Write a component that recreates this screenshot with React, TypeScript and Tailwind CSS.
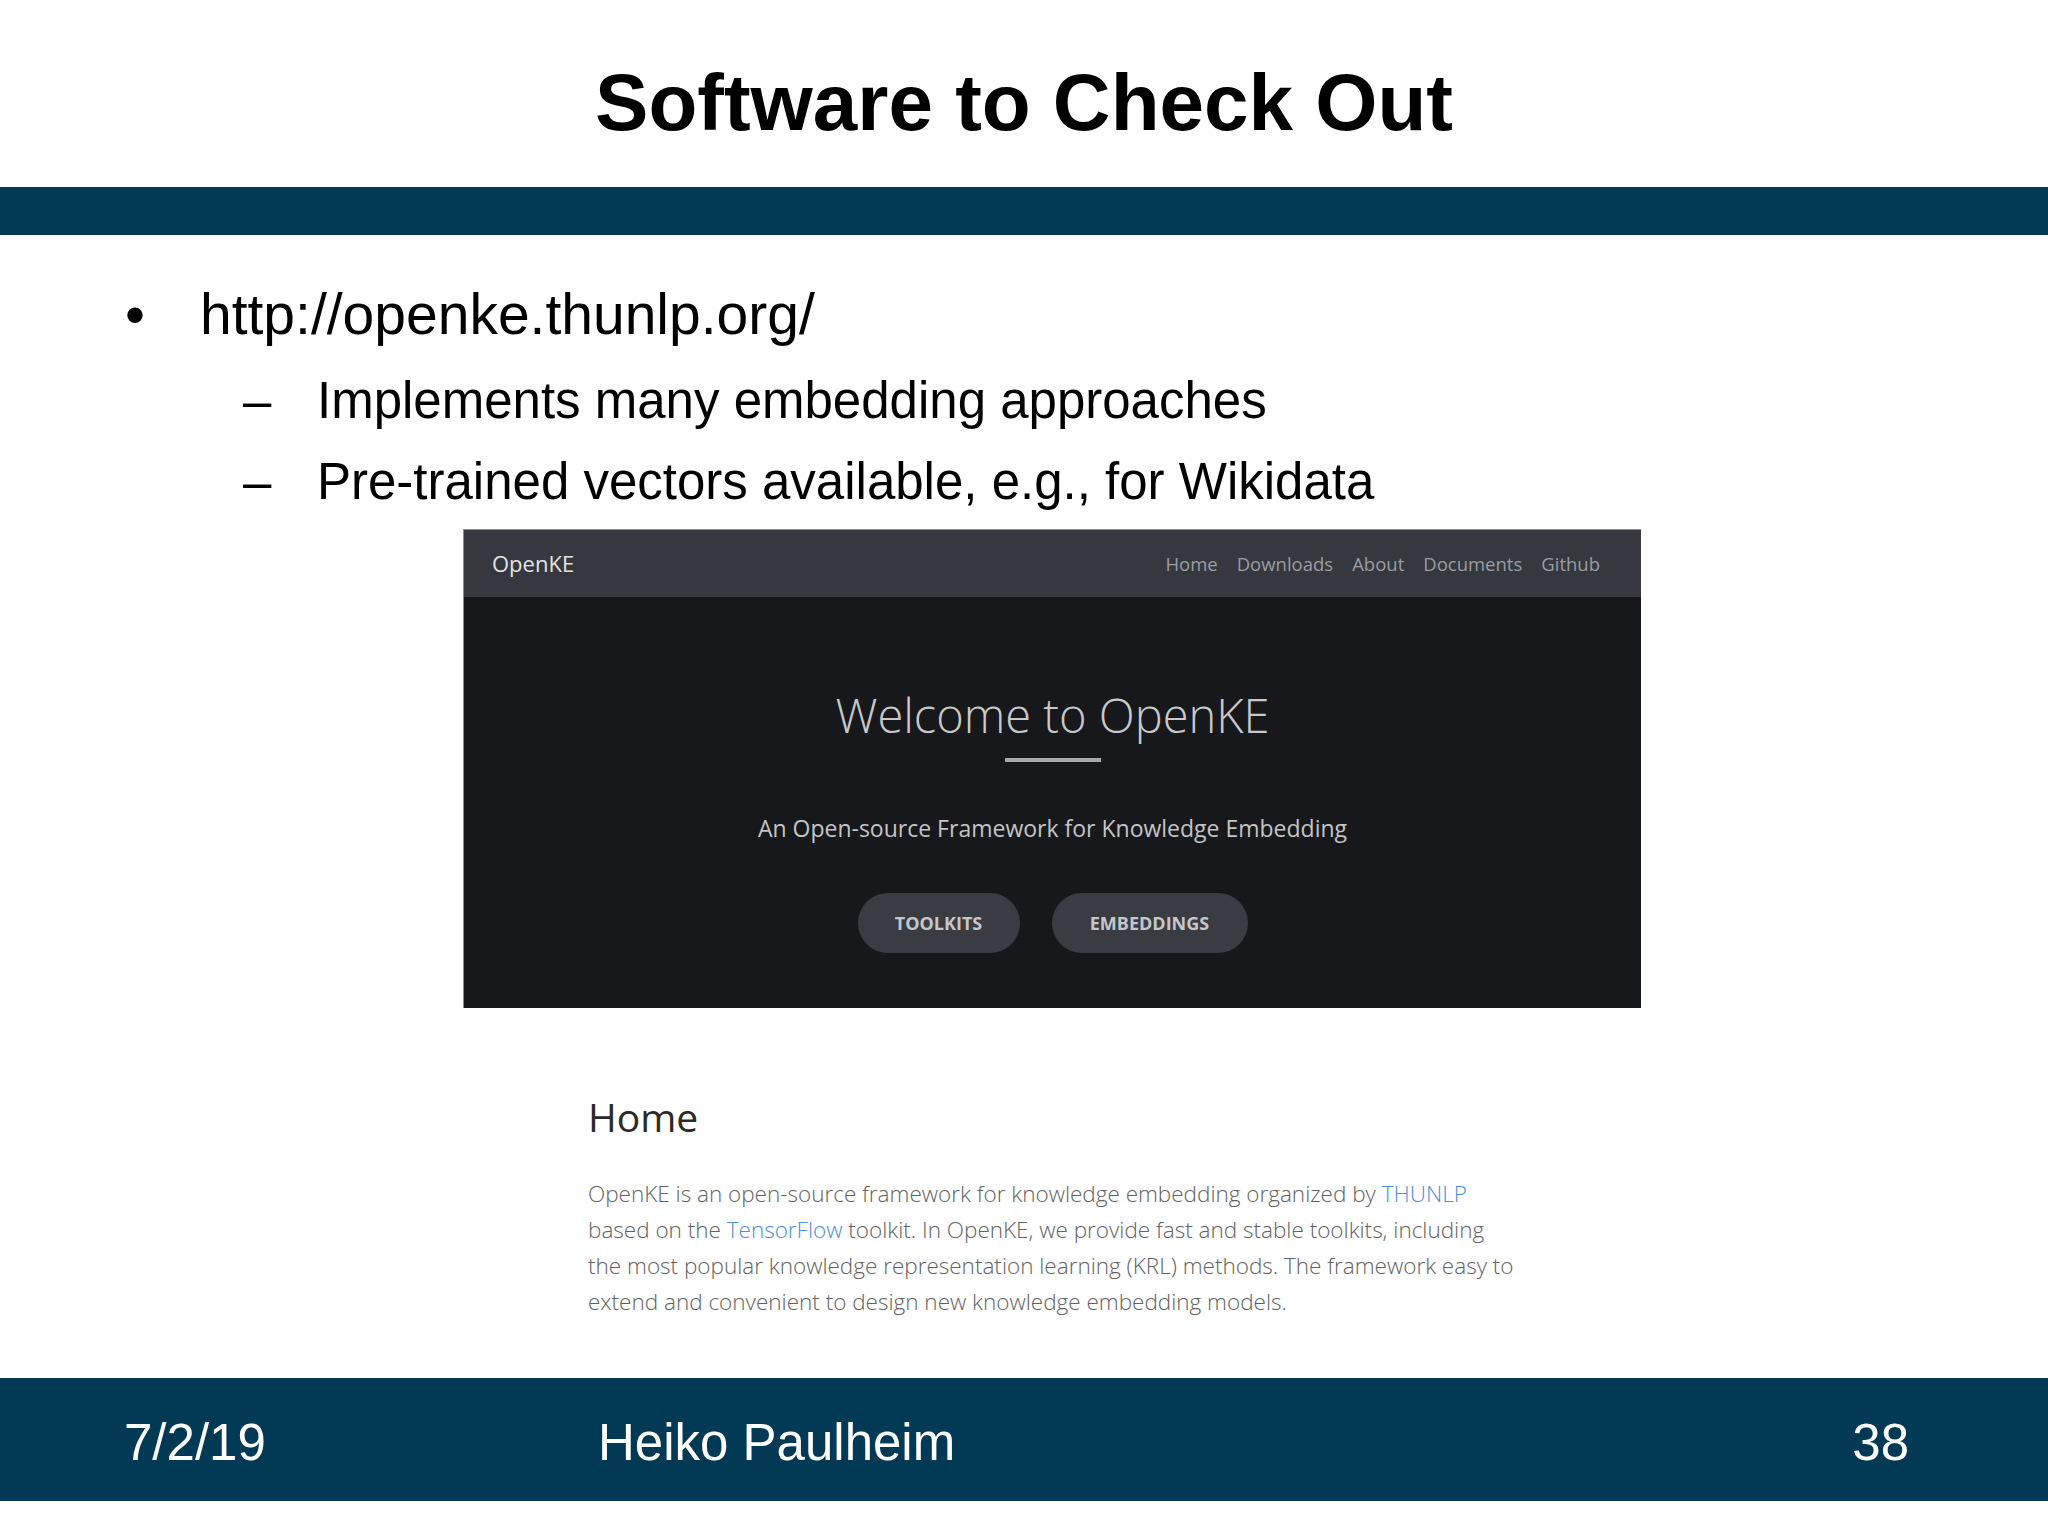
import React from 'react';

const SLIDE_FONT = { fontFamily: '"Liberation Sans", Arial, sans-serif' };
const WEB_FONT = { fontFamily: '"Open Sans", "Noto Sans", sans-serif' };

const NAV_LINKS = ['Home', 'Downloads', 'About', 'Documents', 'Github'];

function OpenKEShot() {
  return (
    <div className="ml-[463px] mt-[7px] w-[1178px]" style={WEB_FONT}>
      {/* Dark hero panel */}
      <div className="h-[479px] border-t border-l border-[#8e8e8e] bg-[#17181c] flex flex-col">
        <div className="h-[67px] shrink-0 bg-[#35383e] flex items-center justify-between pl-[28px] pr-[41px]">
          <span className="text-[22px] text-[#e4e4e4]">OpenKE</span>
          <nav className="flex gap-[19px] text-[18.5px] text-[#9a9da3]">
            {NAV_LINKS.map((l) => (
              <span key={l}>{l}</span>
            ))}
          </nav>
        </div>
        <div className="flex-1 flex flex-col items-center pt-[95px]">
          <h1 className="text-[47px] leading-[47px] font-light text-[#c9c9ca]">Welcome to OpenKE</h1>
          <div className="mt-[19px] h-[4px] w-[96px] bg-[#a7a7a8]" />
          <p className="mt-[55px] text-[23px] leading-[23px] text-[#c4c4c5]">
            An Open-source Framework for Knowledge Embedding
          </p>
          <div className="mt-[53px] flex gap-[32px]">
            <button className="h-[60px] w-[162px] rounded-full bg-[#393c42] text-[18px] font-bold text-[#c6c6c8]">
              TOOLKITS
            </button>
            <button className="h-[60px] w-[196px] rounded-full bg-[#393c42] text-[18px] font-bold text-[#c6c6c8]">
              EMBEDDINGS
            </button>
          </div>
        </div>
      </div>

      {/* Home section below hero */}
      <div className="ml-[125px] mt-[87px]">
        <h2 className="text-[39px] leading-[44px] text-[#2a2a2a]">Home</h2>
        <p className="mt-[37px] text-[22.5px] leading-[36px] font-light text-[#626262] whitespace-nowrap">
          OpenKE is an open-source framework for knowledge embedding organized by{' '}
          <span className="text-[#4a8ee0]">THUNLP</span>
          <br />
          based on the <span className="text-[#4a8ee0]">TensorFlow</span> toolkit. In OpenKE, we provide fast and stable
          toolkits, including
          <br />
          the most popular knowledge representation learning (KRL) methods. The framework easy to
          <br />
          extend and convenient to design new knowledge embedding models.
        </p>
      </div>
    </div>
  );
}

export default function App() {
  return (
    <div className="w-[2048px] h-[1536px] bg-white flex flex-col overflow-hidden" style={SLIDE_FONT}>
      <header className="h-[187px] shrink-0 pt-[63px] text-center">
        <h1 className="text-[80px] leading-[80px] font-bold text-black">Software to Check Out</h1>
      </header>
      <div className="h-[48px] shrink-0 bg-[#023a55]" />

      <main className="flex-1 pt-[51px]">
        <div className="flex items-start text-[57px] leading-[57px] text-black">
          <span className="w-[75px] pl-[125px] box-content">•</span>
          <span>http://openke.thunlp.org/</span>
        </div>
        <div className="mt-[17px] flex flex-col text-[51px] leading-[81px] text-black">
          <div className="flex">
            <span className="w-[74px] pl-[243px] box-content">–</span>
            <span>Implements many embedding approaches</span>
          </div>
          <div className="flex">
            <span className="w-[74px] pl-[243px] box-content">–</span>
            <span>Pre-trained vectors available, e.g., for Wikidata</span>
          </div>
        </div>

        <OpenKEShot />
      </main>

      <footer className="h-[123px] shrink-0 bg-[#023a55] flex items-center pl-[124px] pr-[139px] pt-[8px] text-[51px] text-white">
        <span className="w-[474px]">7/2/19</span>
        <span>Heiko Paulheim</span>
        <span className="ml-auto">38</span>
      </footer>
      <div className="h-[35px] shrink-0" />
    </div>
  );
}
